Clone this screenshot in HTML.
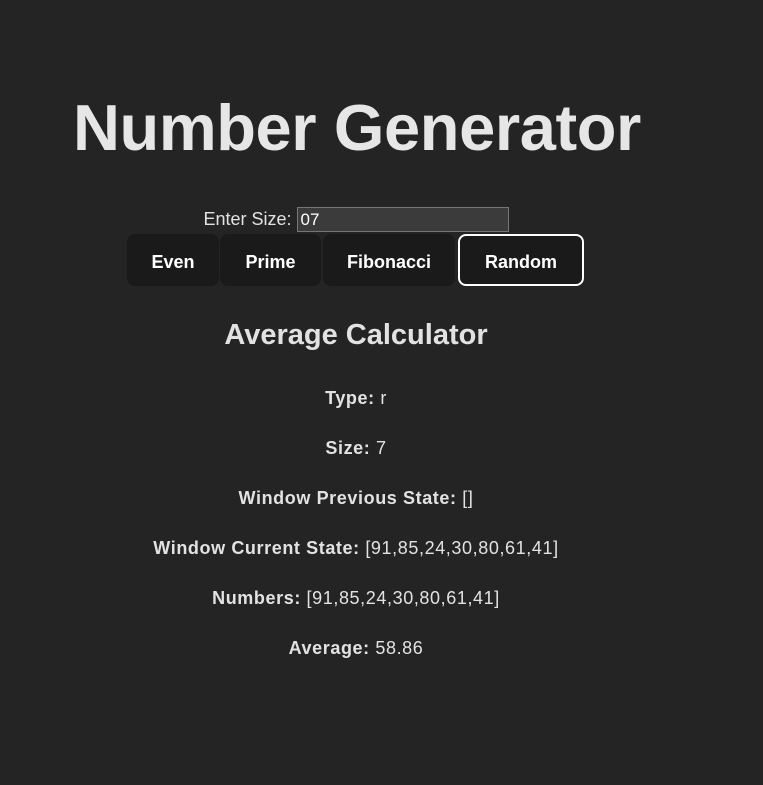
<!DOCTYPE html>
<html><head><style>
html,body{margin:0;padding:0;background:#242424;width:763px;height:785px;overflow:hidden;font-family:"Liberation Sans",sans-serif;color:rgba(255,255,255,0.87)}
.c{position:absolute;left:0;width:712px;text-align:center;white-space:nowrap}
h1{position:absolute;left:73px;top:88px;margin:0;font-size:65px;font-weight:bold;line-height:80px;color:#e6e6e6;letter-spacing:-0.4px}
.lbl{top:207px;font-size:18px;line-height:25px;left:0}
input{width:212px;height:25px;box-sizing:border-box;background:#3b3b3b;border:1px solid #767676;color:#fff;font:17px "Liberation Sans",sans-serif;padding:0 3px;vertical-align:top;margin:0}
.btn{position:absolute;top:234px;height:52px;box-sizing:border-box;background:#1a1a1a;border-radius:8px;border:1px solid transparent;font-size:18px;font-weight:bold;color:#fff;display:flex;align-items:center;justify-content:center;padding-top:4px}
h2{top:318px;margin:0;font-size:29px;font-weight:bold;line-height:34px}
.p{font-size:18px;line-height:22px;letter-spacing:0.6px}
</style></head><body>
<h1>Number Generator</h1>
<div class="c lbl">Enter Size: <input value="07"></div>
<div class="btn" style="left:127px;width:92px">Even</div>
<div class="btn" style="left:220px;width:101px">Prime</div>
<div class="btn" style="left:323px;width:132px">Fibonacci</div>
<div class="btn" style="left:458px;width:126px;border:2px solid #fff">Random</div>
<h2 class="c">Average Calculator</h2>
<div class="c p" style="top:387px"><b>Type:</b> r</div>
<div class="c p" style="top:437px"><b>Size:</b> 7</div>
<div class="c p" style="top:487px"><b>Window Previous State:</b> []</div>
<div class="c p" style="top:537px"><b>Window Current State:</b> [91,85,24,30,80,61,41]</div>
<div class="c p" style="top:587px"><b>Numbers:</b> [91,85,24,30,80,61,41]</div>
<div class="c p" style="top:637px"><b>Average:</b> 58.86</div>
</body></html>
